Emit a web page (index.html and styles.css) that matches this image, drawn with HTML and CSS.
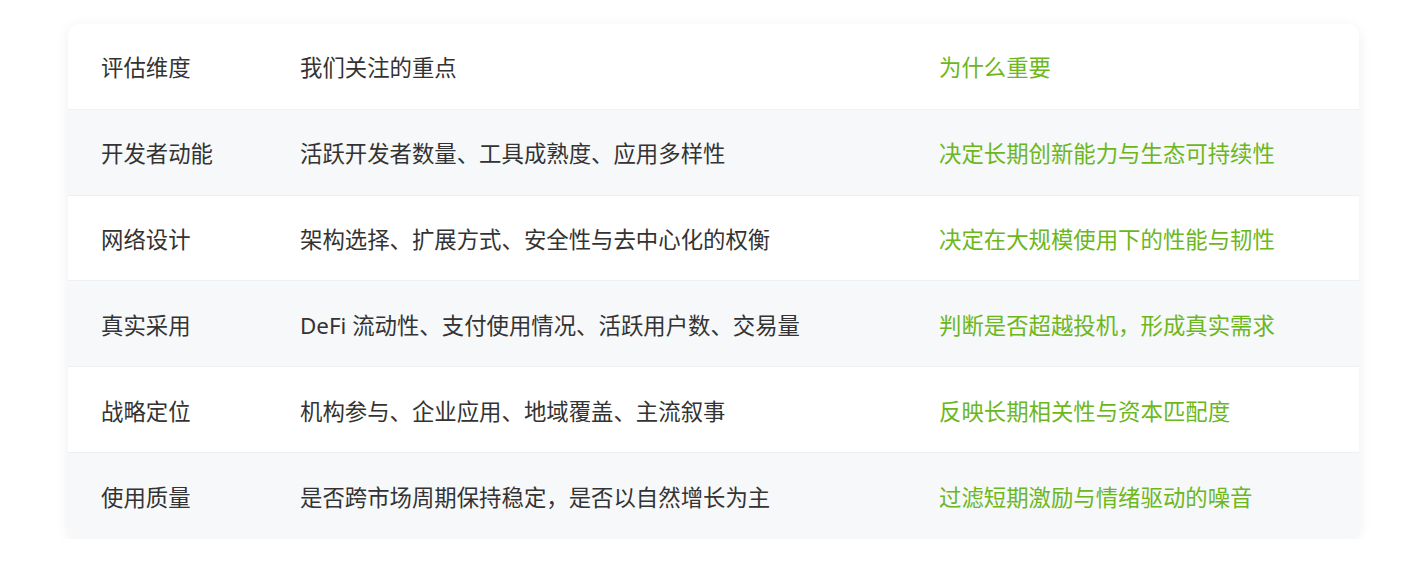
FILE: index.html
```html
<!DOCTYPE html>
<html lang="zh-CN">
<head>
<meta charset="utf-8">
<link rel="stylesheet" href="styles.css">
</head>
<body>
<div class="page">
  <div class="card">
    <div class="row">
      <div class="c1">评估维度</div><div class="c2">我们关注的重点</div><div class="c3">为什么重要</div>
    </div>
    <div class="row alt">
      <div class="c1">开发者动能</div><div class="c2">活跃开发者数量、工具成熟度、应用多样性</div><div class="c3">决定长期创新能力与生态可持续性</div>
    </div>
    <div class="row">
      <div class="c1">网络设计</div><div class="c2">架构选择、扩展方式、安全性与去中心化的权衡</div><div class="c3">决定在大规模使用下的性能与韧性</div>
    </div>
    <div class="row alt">
      <div class="c1">真实采用</div><div class="c2">DeFi 流动性、支付使用情况、活跃用户数、交易量</div><div class="c3">判断是否超越投机，形成真实需求</div>
    </div>
    <div class="row">
      <div class="c1">战略定位</div><div class="c2">机构参与、企业应用、地域覆盖、主流叙事</div><div class="c3">反映长期相关性与资本匹配度</div>
    </div>
    <div class="row alt last">
      <div class="c1">使用质量</div><div class="c2">是否跨市场周期保持稳定，是否以自然增长为主</div><div class="c3">过滤短期激励与情绪驱动的噪音</div>
    </div>
  </div>
</div>
</body>
</html>
```
FILE: styles.css
```css
html, body { margin: 0; padding: 0; background: #ffffff; }
body { font-family: "Noto Sans", "Noto Sans CJK SC", sans-serif; color: #333333; }
.page { padding: 24px 52px 0 68px; }
.card {
  width: 1291px;
  background: #fff;
  border-radius: 12px;
  overflow: hidden;
  box-shadow: 0 3px 14px rgba(0,0,0,0.07);
}
.row {
  display: grid;
  grid-template-columns: 199px 639px 1fr;
  height: 85.8px;
  align-items: center;
  border-bottom: 1px solid #eef0f3;
  box-sizing: border-box;
  font-size: 22.4px;
  line-height: 32px;
}
.row.alt { background: #f7f8fa; }
.row.last { border-bottom: none; }
.c1, .c2, .c3 { padding: 4px 33px 0; white-space: nowrap; }
.c3 { color: #6cb71c; }
```
